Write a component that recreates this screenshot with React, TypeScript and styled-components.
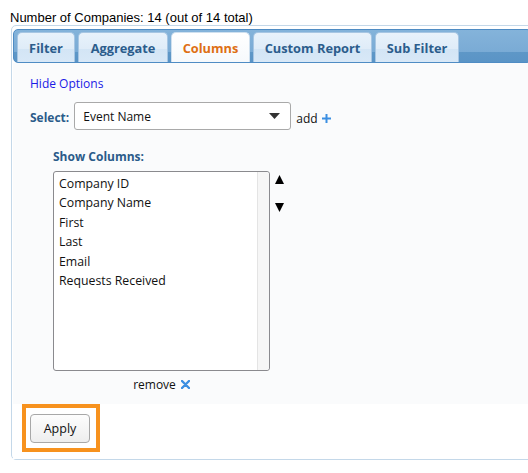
import React from 'react';
import styled, { createGlobalStyle } from 'styled-components';

const GlobalStyle = createGlobalStyle`
  body {
    margin: 0;
    background: #ffffff;
    font-family: 'Open Sans', 'Noto Sans', sans-serif;
  }
  * {
    box-sizing: border-box;
  }
`;

const Page = styled.div`
  width: 100%;
  overflow: hidden;
`;

const Summary = styled.div`
  font-family: 'Liberation Sans', Arial, sans-serif;
  font-size: 13px;
  line-height: 15px;
  color: #000;
  padding: 10px 0 0 10px;
  height: 25px;
`;

const Wrapper = styled.div`
  margin-left: 11px;
  margin-right: -6px;
  border: 1px solid #c4d8e9;
  border-radius: 5px;
  padding: 3px 1px 0;
  background: #ffffff;
`;

const TabBar = styled.div`
  display: flex;
  align-items: flex-end;
  gap: 3px;
  height: 34px;
  padding-left: 3px;
  border: 1px solid #4f8cc4;
  border-radius: 5px;
  background: linear-gradient(#84b3da 0%, #7aabd5 68%, #5e97c7 69%, #5a94c6 100%);
`;

const Tab = styled.div<{ active?: boolean; width: number }>`
  width: ${p => p.width}px;
  height: 30px;
  display: flex;
  align-items: center;
  justify-content: center;
  border: 1px solid ${p => (p.active ? '#cfe0ef' : '#a7c6e3')};
  border-bottom: none;
  border-radius: 5px 5px 0 0;
  background: ${p =>
    p.active
      ? 'linear-gradient(#ffffff 0%, #f6f9fc 100%)'
      : 'linear-gradient(#e8f2fb 0%, #dfecf8 55%, #d3e5f5 56%, #d8e8f7 100%)'};
  color: ${p => (p.active ? '#de6f14' : '#2c5d8c')};
  font-size: 12.8px;
  font-weight: 700;
  white-space: nowrap;
`;

const Content = styled.div`
  background: #fafbfc;
  padding: 13px 0 12px 17px;
`;

const HideLink = styled.a`
  display: block;
  color: #1a1ae6;
  font-size: 12px;
  line-height: 16px;
  text-decoration: none;
`;

const SelectRow = styled.div`
  display: flex;
  align-items: center;
  margin-top: 13px;
  gap: 5px;
`;

const Label = styled.span`
  color: #2b5b8a;
  font-size: 12px;
  font-weight: 700;
  line-height: 16px;
`;

const SelectBox = styled.div`
  width: 217px;
  height: 28px;
  border: 1px solid #a9a9a9;
  border-radius: 3px;
  background: #ffffff;
  display: flex;
  align-items: center;
  justify-content: space-between;
  padding: 0 10px 0 8px;
  font-size: 12px;
  color: #111;
  margin-top: -3px;
`;

const AddText = styled.span`
  font-size: 12px;
  color: #111;
  display: flex;
  align-items: center;
  gap: 4px;
  margin-top: 2px;
`;

const ColumnsSection = styled.div`
  margin: 14px 0 0 23px;
`;

const ListRow = styled.div`
  display: flex;
  gap: 5px;
  margin-top: 5px;
`;

const ListBox = styled.div`
  width: 217px;
  height: 200px;
  border: 1px solid #8a8a8e;
  border-radius: 3px;
  background: #ffffff;
  display: flex;
`;

const ListItems = styled.ul`
  flex: 1;
  list-style: none;
  margin: 0;
  padding: 2px 0 0 5px;
`;

const ListItem = styled.li`
  font-size: 12.3px;
  line-height: 19.4px;
  color: #111;
`;

const ScrollTrack = styled.div`
  width: 12px;
  background: #f6f6f6;
  border-left: 1px solid #e4e4e4;
  border-radius: 0 3px 3px 0;
`;

const Movers = styled.div`
  display: flex;
  flex-direction: column;
  gap: 19px;
  padding-top: 4px;
`;

const RemoveRow = styled.div`
  width: 217px;
  display: flex;
  justify-content: center;
  align-items: center;
  gap: 5px;
  font-size: 12px;
  color: #111;
  margin-top: 5px;
`;

const Footer = styled.div`
  background: #ffffff;
  padding: 0 0 7px 9px;
  margin-top: -1px;
`;

const Highlight = styled.div`
  display: inline-block;
  border: 4px solid #f7921e;
  padding: 6px 6px 5px 4px;
  background: #ffffff;
`;

const Button = styled.button`
  display: block;
  width: 60px;
  height: 29px;
  border: 1px solid #a8a8a8;
  border-radius: 4px;
  background: linear-gradient(#fdfdfd 0%, #eeeeee 100%);
  font-family: 'Open Sans', 'Noto Sans', sans-serif;
  font-size: 12.5px;
  color: #111;
  padding: 0;
`;

const Caret = () => (
  <svg width="11" height="6" viewBox="0 0 11 6">
    <path d="M0 0 L11 0 L5.5 6 Z" fill="#333" />
  </svg>
);

const Triangle = ({ down }: { down?: boolean }) => (
  <svg width="9" height="9" viewBox="0 0 9 9">
    <path d={down ? 'M0 0 L9 0 L4.5 9 Z' : 'M4.5 0 L9 9 L0 9 Z'} fill="#000" />
  </svg>
);

const Plus = () => (
  <svg width="9" height="9" viewBox="0 0 9 9">
    <path d="M3.5 0 H5.5 V3.5 H9 V5.5 H5.5 V9 H3.5 V5.5 H0 V3.5 H3.5 Z" fill="#3b8fe2" />
  </svg>
);

const Cross = () => (
  <svg width="9" height="9" viewBox="0 0 9 9">
    <path d="M1 1 L8 8 M8 1 L1 8" stroke="#3b8fe2" strokeWidth="2.4" strokeLinecap="round" />
  </svg>
);

const tabs = [
  { label: 'Filter', width: 58 },
  { label: 'Aggregate', width: 90 },
  { label: 'Columns', width: 79 },
  { label: 'Custom Report', width: 119 },
  { label: 'Sub Filter', width: 84 },
];
const columns = ['Company ID', 'Company Name', 'First', 'Last', 'Email', 'Requests Received'];

export default function App() {
  return (
    <Page>
      <GlobalStyle />
      <Summary>Number of Companies: 14 (out of 14 total)</Summary>
      <Wrapper>
        <TabBar>
          {tabs.map(t => (
            <Tab key={t.label} width={t.width} active={t.label === 'Columns'}>
              {t.label}
            </Tab>
          ))}
        </TabBar>
        <Content>
          <HideLink href="#">Hide Options</HideLink>
          <SelectRow>
            <Label>Select:</Label>
            <SelectBox>
              <span>Event Name</span>
              <Caret />
            </SelectBox>
            <AddText>
              add <Plus />
            </AddText>
          </SelectRow>
          <ColumnsSection>
            <Label>Show Columns:</Label>
            <ListRow>
              <ListBox>
                <ListItems>
                  {columns.map(c => (
                    <ListItem key={c}>{c}</ListItem>
                  ))}
                </ListItems>
                <ScrollTrack />
              </ListBox>
              <Movers>
                <Triangle />
                <Triangle down />
              </Movers>
            </ListRow>
            <RemoveRow>
              remove <Cross />
            </RemoveRow>
          </ColumnsSection>
        </Content>
        <Footer>
          <Highlight>
            <Button>Apply</Button>
          </Highlight>
        </Footer>
      </Wrapper>
    </Page>
  );
}
